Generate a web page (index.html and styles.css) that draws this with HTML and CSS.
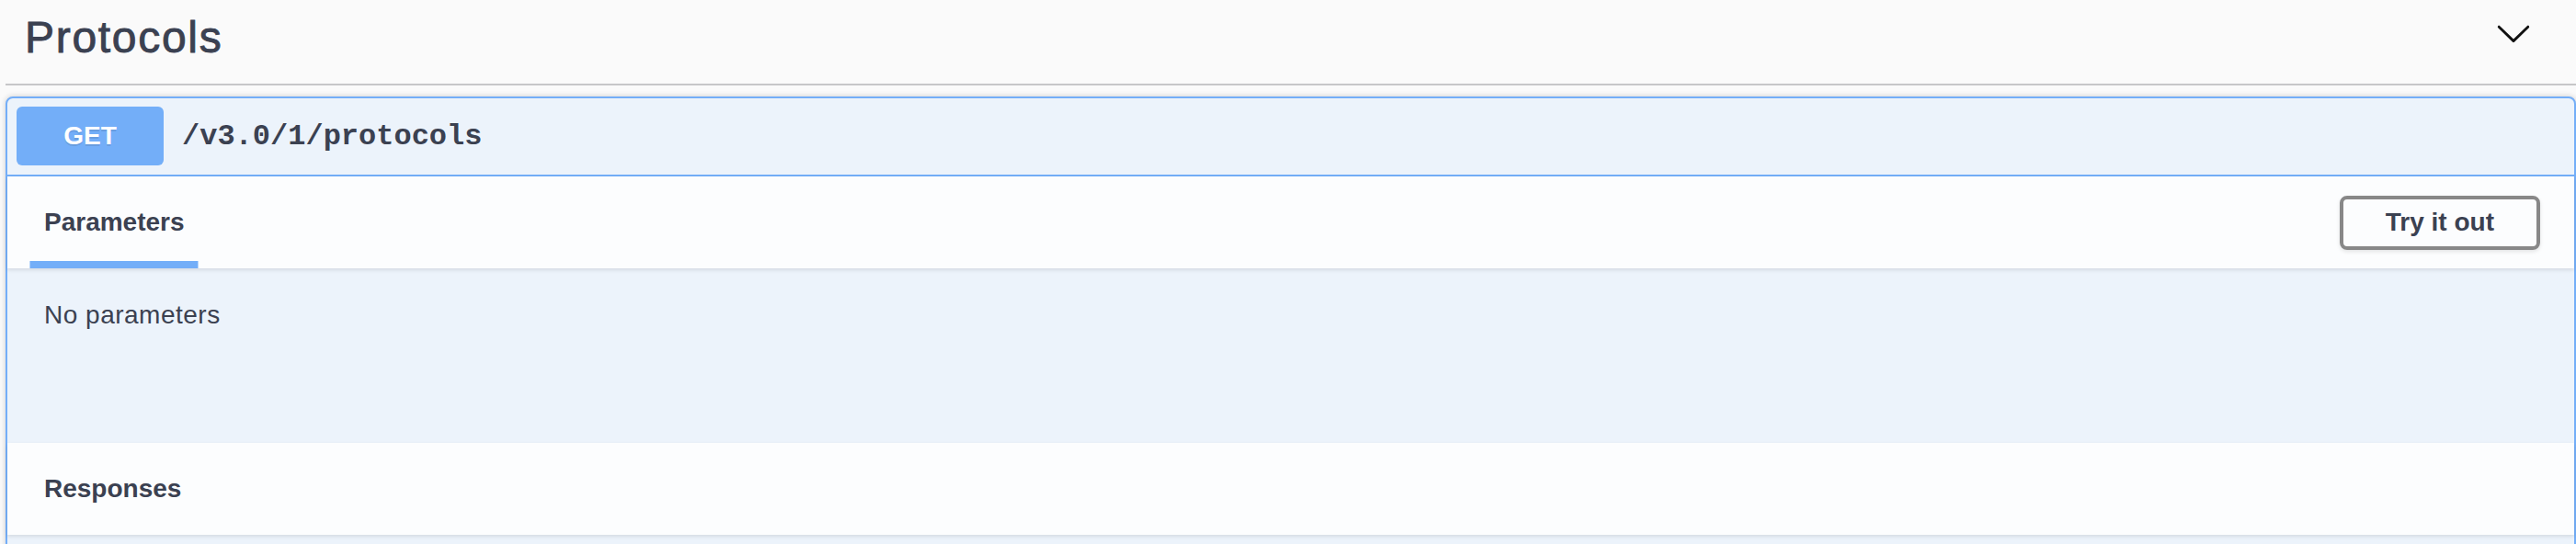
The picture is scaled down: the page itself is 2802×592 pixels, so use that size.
FILE: index.html
```html
<!DOCTYPE html>
<html lang="en">
<head>
<meta charset="utf-8">
<title>Protocols</title>
<link rel="stylesheet" href="styles.css">
</head>
<body>
<div class="wrap">
  <div class="tag-header">
    <h3 class="tag-title">Protocols</h3>
    <button class="expand" aria-label="Collapse">
      <svg width="40" height="40" viewBox="0 0 20 20"><path d="M17.418 6.109c.272-.268.709-.268.979 0s.271.701 0 .969l-7.908 7.83c-.27.268-.707.268-.979 0l-7.908-7.83c-.27-.268-.27-.701 0-.969.271-.268.709-.268.979 0L10 13.25l7.418-7.141z"/></svg>
    </button>
  </div>
  <div class="opblock">
    <div class="summary">
      <span class="method">GET</span>
      <span class="path">/v3.0/1/protocols</span>
    </div>
    <div class="section-header">
      <div class="tab"><h4 class="tab-label">Parameters</h4></div>
      <button class="btn-try">Try it out</button>
    </div>
    <div class="desc">
      <p class="no-params">No parameters</p>
    </div>
    <div class="section-header">
      <h4 class="section-title">Responses</h4>
    </div>
    <div class="rest"></div>
  </div>
</div>
</body>
</html>
```
FILE: styles.css
```css
html, body {
  margin: 0;
  padding: 0;
  background: #fafafa;
  font-family: "Liberation Sans", Arial, sans-serif;
  color: #3b4151;
  overflow: hidden;
}

.wrap {
  padding-left: 6px;
}

.tag-header {
  display: flex;
  align-items: center;
  justify-content: space-between;
  box-sizing: border-box;
  height: 93px;
  padding: 0 48px 10px 21px;
  border-bottom: 2px solid #c6c6c8;
}

.tag-title {
  margin: 0;
  font-size: 48px;
  font-weight: normal;
  letter-spacing: 1.7px;
  -webkit-text-stroke: 0.9px #3b4151;
  color: #3b4151;
}

.expand {
  border: none;
  background: none;
  padding: 0;
  margin: 0 0 9px 0;
  width: 40px;
  height: 40px;
  display: flex;
}

.expand svg {
  fill: #111;
}

.opblock {
  margin-top: 12px;
  border: 2px solid #73aef8;
  border-radius: 8px;
  background: #ecf3fb;
  box-shadow: 0 0 6px rgba(0, 0, 0, 0.19);
}

.summary {
  display: flex;
  align-items: center;
  padding: 9px 10px 10px;
  border-bottom: 2px solid #73aef8;
}

.method {
  display: flex;
  align-items: center;
  justify-content: center;
  width: 160px;
  height: 64px;
  border-radius: 6px;
  background: #73aef8;
  color: #fff;
  font-size: 28px;
  font-weight: bold;
  text-shadow: 0 2px 0 rgba(0, 0, 0, 0.1);
}

.path {
  padding: 0 20px;
  font-family: "Liberation Mono", "Courier New", monospace;
  font-size: 32px;
  font-weight: bold;
  color: #3b4151;
}

.section-header {
  position: relative;
  display: flex;
  align-items: center;
  justify-content: space-between;
  box-sizing: border-box;
  height: 100px;
  padding: 0 37px 0 40px;
  background: #fcfdfe;
  box-shadow: 0 2px 4px rgba(0, 0, 0, 0.1);
}

.tab {
  position: relative;
  display: flex;
  align-items: center;
  height: 100%;
}

.tab-label,
.section-title {
  margin: 0;
  font-size: 28px;
  font-weight: bold;
  color: #3b4151;
}

.tab::after {
  content: "";
  position: absolute;
  bottom: 0;
  left: 50%;
  transform: translateX(-50%);
  width: 120%;
  height: 8px;
  background: #73aef8;
}

.btn-try {
  box-sizing: border-box;
  height: 59px;
  padding: 0 46px;
  border: 4px solid #888;
  border-radius: 8px;
  background: transparent;
  font-family: "Liberation Sans", Arial, sans-serif;
  font-size: 28px;
  font-weight: bold;
  color: #3b4151;
  box-shadow: 0 2px 4px rgba(0, 0, 0, 0.1);
}

.desc {
  box-sizing: border-box;
  height: 190px;
  padding: 35px 40px 0;
}

.no-params {
  margin: 0;
  font-size: 28px;
  line-height: 32px;
  letter-spacing: 0.5px;
  color: #3b4151;
}

.rest {
  height: 60px;
}
```
